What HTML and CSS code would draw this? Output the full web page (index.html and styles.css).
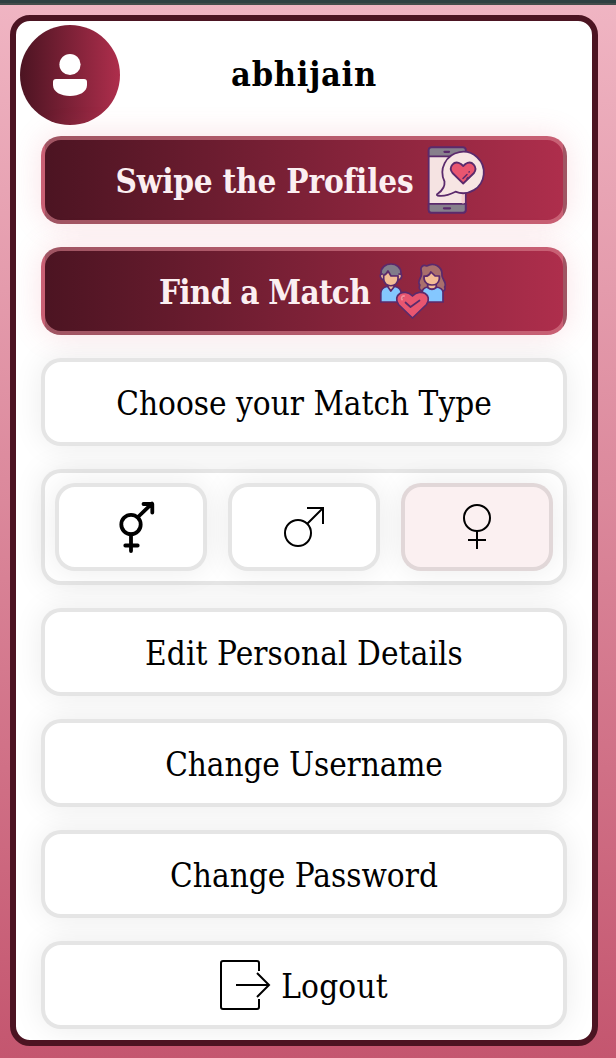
FILE: index.html
```html
<!DOCTYPE html>
<html lang="en">
<head>
<meta charset="utf-8">
<title>Profile menu</title>
<link rel="stylesheet" href="styles.css">
</head>
<body>
<div class="topbar"></div>
<main class="panel">
  <header class="profile">
    <div class="avatar">
      <svg width="100" height="100" viewBox="0 0 100 100" fill="#fff"><circle cx="50" cy="39.5" r="10.6"/><path d="M36 54H64Q67 54 67 57V60C67 67 59 71 50 71S33 67 33 60V57Q33 54 36 54Z"/></svg>
    </div>
    <h1 class="username">abhijain</h1>
  </header>
  <nav class="menu">
    <a class="item primary"><span class="label swipe">Swipe the Profiles</span>
      <svg class="icon" width="70" height="70" viewBox="0 0 70 70" stroke="#5b2a6c" stroke-width="1.8" stroke-linecap="round" stroke-linejoin="round">
        <rect x="8.7" y="2.3" width="37" height="65.4" rx="2.8" fill="#f5e3e2"/>
        <path d="M8.7 11.3V5Q8.7 2.3 11.5 2.3H43Q45.7 2.3 45.7 5V11.3ZM8.7 58.8H45.7V65Q45.7 67.7 43 67.7H11.5Q8.7 67.7 8.7 65Z" fill="#87808c"/>
        <path d="M43 13V57" stroke="#f5cfd0" stroke-width="3"/>
        <path d="M24.5 6.8H29M24 63.3H30" stroke-width="2.3"/>
        <path d="M24.5 36.5A20.7 20.7 0 1 1 35.5 46.7C30 49.5 23 51.5 17.5 50.5C16.5 50 16.7 49.3 18 48.5C23 45 25 41 24.5 36.5Z" fill="#f7e5e3"/>
        <path d="M43.2 38.5L32.5 28C28 22 34 14.5 41 19L43.2 21L45.4 19C52 14.5 58 22 54 28Z" fill="#e85670"/>
        <path d="M43 33.5L47 29.5M49 27L49.3 26.7M47 33.5L48 32.5" stroke-width="1.5"/>
      </svg>
    </a>
    <a class="item primary"><span class="label find">Find a Match</span>
      <svg class="icon" width="70" height="70" viewBox="0 0 70 70" stroke="#5b2a6c" stroke-width="1.7" stroke-linecap="round" stroke-linejoin="round">
        <path d="M3.8 46V37Q4 32 10 30.5H18Q24 32 24.2 37V46Z" fill="#84c7ff"/>
        <path d="M11 28V31L13.8 35L17 31V28" fill="#f3bd96"/>
        <path d="M4 20.5V17C4 5 24 5 24 17V20.5Z" fill="#817d8a"/>
        <path d="M5.5 18Q2.5 18 3.5 21T7 23.5M22 18Q25.5 18 24.5 21T21 23.5" fill="#f3bd96"/>
        <path d="M6.7 19C9 19 10 17 11 15L14 20H21V23C21 32 6.7 32 6.7 23Z" fill="#f3bd96"/>
        <g transform="translate(-2 0) scale(1.055 1)">
          <path d="M43.5 12.5Q45 8 49 10C56 5.5 64 11 63.5 19C63 23 69 27 66 31C68 35 62 37 59 34H48C43 36 41 33 42.5 29C39 25 45 22 44 17Z" fill="#a96f6c"/>
          <path d="M44.7 46V36Q45 32 50 31H58Q64 32 64.5 36V46Z" fill="#84c7ff"/>
          <path d="M50 28V31.5Q54 35 58 31.5V28" fill="#f3bd96"/>
          <path d="M46.5 20C50 21 52 18 53 16L57 20H61V23C60 31 48 31 46.5 23Z" fill="#f3bd96"/>
        </g>
        <path d="M35.5 62L21.5 48.5C15 39 27 31.5 35.5 40C44 31.5 56 39 49.5 48.5Z" fill="#e85670"/>
        <path d="M25 43.5Q24 40.5 27 40" stroke="#f48c9b" stroke-width="2"/>
        <path d="M28.5 46.5L33.5 51L42.5 44.5" fill="none"/>
      </svg>
    </a>
    <a class="item"><span class="label choose">Choose your Match Type</span></a>
    <div class="choices">
      <a class="item choice"><svg width="60" height="60" viewBox="0 0 60 60" fill="none" stroke="#000" stroke-width="3.8" stroke-linecap="round" stroke-linejoin="round"><circle cx="30" cy="27.5" r="9.7"/><path d="M37 20L51 6.5M42.5 7H51.3V15.5M30 37.5V54M24.3 48.5H36.7"/></svg></a>
      <a class="item choice"><svg width="60" height="60" viewBox="0 0 60 60" fill="none" stroke="#000" stroke-width="2"><circle cx="24" cy="36" r="13"/><path d="M33.5 26.5L49 11M33 11H49V27"/></svg></a>
      <a class="item choice selected"><svg width="60" height="60" viewBox="0 0 60 60" fill="none" stroke="#000" stroke-width="2"><circle cx="30" cy="21" r="13"/><path d="M30 34V52M21 43H39"/></svg></a>
    </div>
    <a class="item"><span class="label edit">Edit Personal Details</span></a>
    <a class="item"><span class="label user">Change Username</span></a>
    <a class="item"><span class="label pass">Change Password</span></a>
    <a class="item logout"><svg width="52" height="52" viewBox="0 0 52 52" fill="none" stroke="#000" stroke-width="2"><path d="M40 12V4Q40 2 38 2H4Q2 2 2 4V48Q2 50 4 50H38Q40 50 40 48V40M17 26H50M38 14L50 26L38 38"/></svg><span class="label out">Logout</span></a>
  </nav>
</main>
</body>
</html>
```
FILE: styles.css
```css
* { box-sizing: border-box; }
body {
  margin: 0;
  height: 1058px;
  overflow: hidden;
  background: linear-gradient(#f0b5c3, #c4566f);
  font-family: "DejaVu Serif Condensed", "DejaVu Serif", serif;
  font-stretch: condensed;
  color: #000;
}
.topbar { height: 5px; background: #2f4042; border-bottom: 2px solid #444c4b; }
.panel {
  margin: 10px 18px 0 10px;
  height: 1031px;
  border: 6px solid #4c1422;
  border-radius: 20px;
  background: #fff;
  overflow: hidden;
}
.profile {
  display: grid;
  grid-template-columns: 100px 1fr 100px;
  align-items: center;
  padding: 4px 4px 0;
}
.avatar {
  width: 100px;
  height: 100px;
  border-radius: 50%;
  background: linear-gradient(90deg, #4c1422, #ae2e4c);
}
.username {
  margin: 0;
  padding-bottom: 3px;
  text-align: center;
  font-size: 34px;
  letter-spacing: 0.75px;
  line-height: 40px;
  white-space: nowrap;
}
.menu { display: flex; flex-direction: column; gap: 23px; padding: 11px 25px 0; }
.item {
  display: flex;
  align-items: center;
  justify-content: center;
  gap: 10px;
  height: 88px;
  border: 4px solid rgba(0, 0, 0, 0.1);
  border-radius: 20px;
  background-color: #fff;
  box-shadow: 0 0 30px rgba(0, 0, 0, 0.08);
}
.label { padding-top: 4px; font-size: 33px; line-height: 44px; white-space: nowrap; }
.swipe { letter-spacing: -0.2px; }
.find { letter-spacing: -0.75px; }
.edit { letter-spacing: 0.1px; }
.user { letter-spacing: -0.1px; }
.out { letter-spacing: 0.2px; }
.primary {
  gap: 9px;
  padding-right: 2px;
  border-color: rgba(220, 131, 145, 0.59);
  background-image: linear-gradient(90deg, #4c1422, #ae2e4c);
  box-shadow: 0 0 30px rgba(225, 90, 110, 0.18);
  color: #fbeff1;
  font-weight: bold;
}
.primary .icon { margin-left: -2px; }
.logout { padding-right: 1px; }
.choices {
  display: flex;
  gap: 21px;
  height: 116px;
  padding: 10px;
  border: 4px solid rgba(0, 0, 0, 0.1);
  border-radius: 20px;
  background-color: #fff;
  box-shadow: 0 0 30px rgba(0, 0, 0, 0.08);
}
.choice { width: 152px; }
.selected { background-color: #fbf0f1; }
```
